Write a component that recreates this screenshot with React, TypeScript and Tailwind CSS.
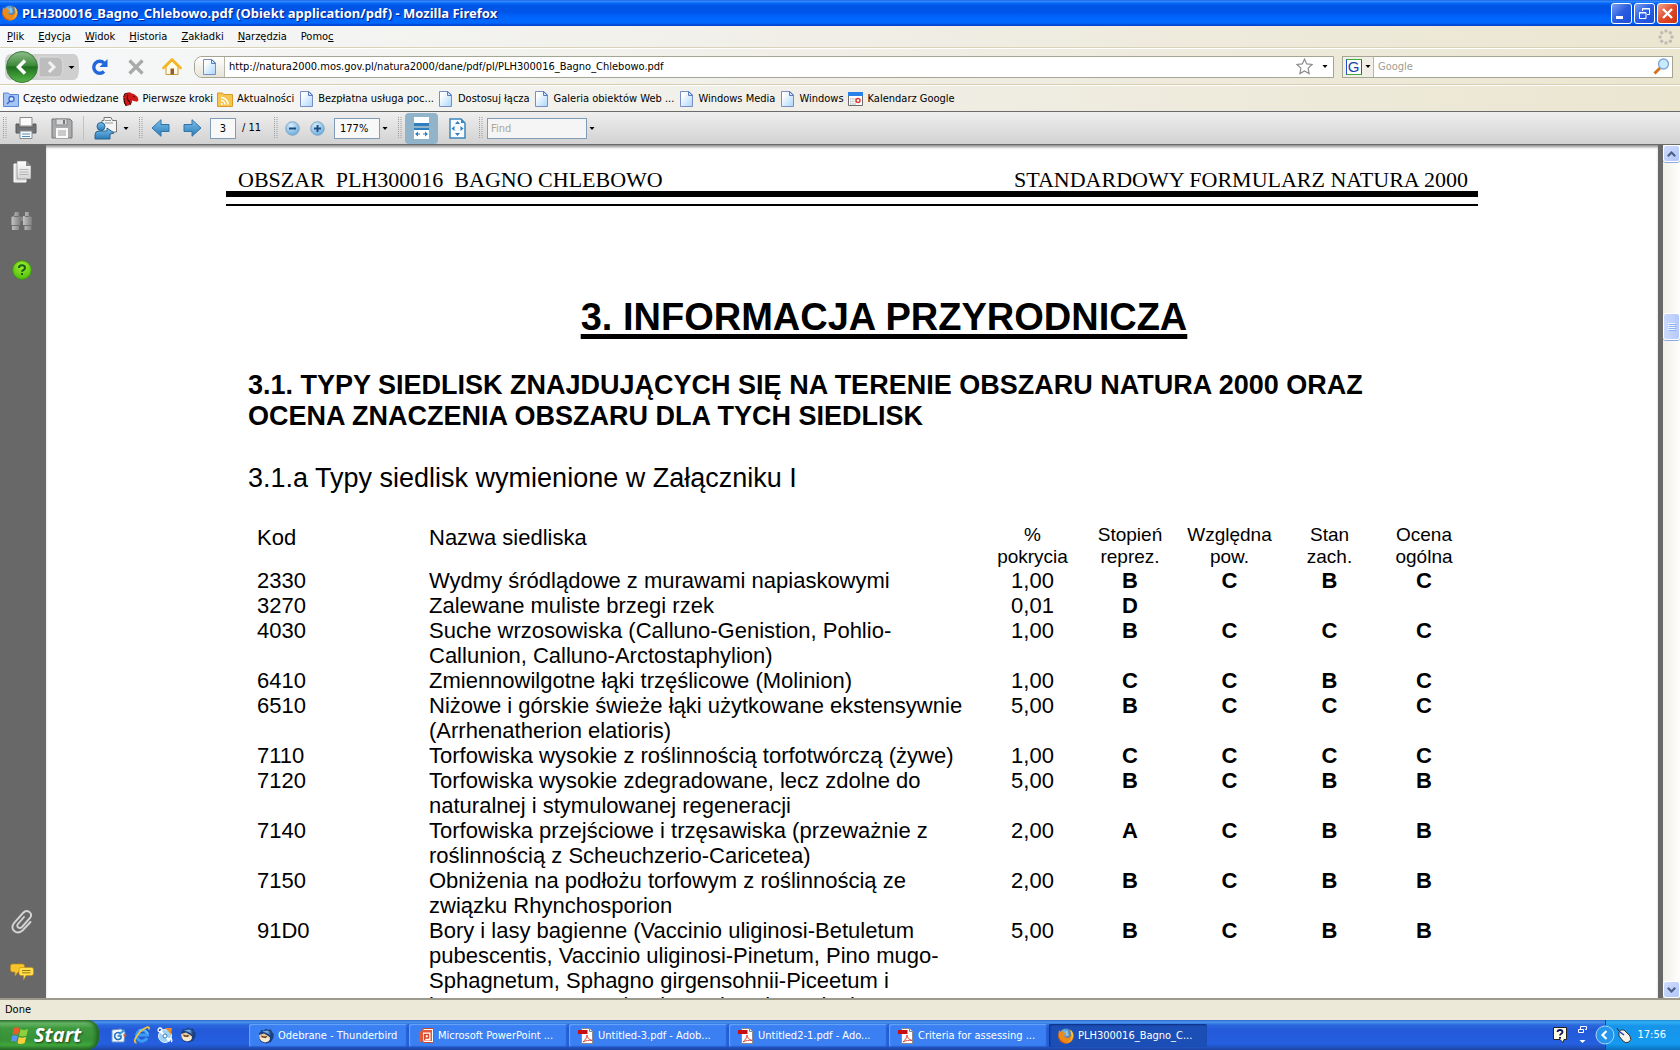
import type { ReactNode } from "react";

type Habitat = {
  code: string;
  name: string;
  cover: string;
  grades: string[];
};

const HABITATS: Habitat[] = [
  { code: "2330", name: "Wydmy śródlądowe z murawami napiaskowymi", cover: "1,00", grades: ["B", "C", "B", "C"] },
  { code: "3270", name: "Zalewane muliste brzegi rzek", cover: "0,01", grades: ["D", "", "", ""] },
  { code: "4030", name: "Suche wrzosowiska (Calluno-Genistion, Pohlio-Callunion, Calluno-Arctostaphylion)", cover: "1,00", grades: ["B", "C", "C", "C"] },
  { code: "6410", name: "Zmiennowilgotne łąki trzęślicowe (Molinion)", cover: "1,00", grades: ["C", "C", "B", "C"] },
  { code: "6510", name: "Niżowe i górskie świeże łąki użytkowane ekstensywnie (Arrhenatherion elatioris)", cover: "5,00", grades: ["B", "C", "C", "C"] },
  { code: "7110", name: "Torfowiska wysokie z roślinnością torfotwórczą (żywe)", cover: "1,00", grades: ["C", "C", "C", "C"] },
  { code: "7120", name: "Torfowiska wysokie zdegradowane, lecz zdolne do naturalnej i stymulowanej regeneracji", cover: "5,00", grades: ["B", "C", "B", "B"] },
  { code: "7140", name: "Torfowiska przejściowe i trzęsawiska (przeważnie z roślinnością z Scheuchzerio-Caricetea)", cover: "2,00", grades: ["A", "C", "B", "B"] },
  { code: "7150", name: "Obniżenia na podłożu torfowym z roślinnością ze związku Rhynchosporion", cover: "2,00", grades: ["B", "C", "B", "B"] },
  {
    code: "91D0",
    name: "Bory i lasy bagienne (Vaccinio uliginosi-Betuletum pubescentis, Vaccinio uliginosi-Pinetum, Pino mugo-Sphagnetum, Sphagno girgensohnii-Piceetum i brzozowo-sosnowe bagienne lasy borealne)",
    cover: "5,00",
    grades: ["B", "C", "B", "B"],
  },
];

const Defs = () => (
  <svg width="0" height="0" className="absolute" aria-hidden="true">
    <defs>
      <linearGradient id="blue" x1="0" y1="0" x2="0" y2="1">
        <stop offset="0" stopColor="#7cc0ea" />
        <stop offset="1" stopColor="#2a7ab8" />
      </linearGradient>
      <linearGradient id="page" x1="0" y1="0" x2="1" y2="1">
        <stop offset="0.2" stopColor="#ffffff" />
        <stop offset="1" stopColor="#a9d5fb" />
      </linearGradient>
      <linearGradient id="back" x1="0" y1="0" x2="0" y2="1">
        <stop offset="0" stopColor="#8fbf8c" />
        <stop offset="0.45" stopColor="#3f8a3c" />
        <stop offset="0.5" stopColor="#1f701f" />
        <stop offset="1" stopColor="#55b848" />
      </linearGradient>
      <linearGradient id="metal" x1="0" y1="0" x2="1" y2="0">
        <stop offset="0" stopColor="#c4c4c4" />
        <stop offset="1" stopColor="#7d7d7d" />
      </linearGradient>
      <linearGradient id="silver" x1="0" y1="0" x2="0" y2="1">
        <stop offset="0" stopColor="#ffffff" />
        <stop offset="1" stopColor="#d5d5d5" />
      </linearGradient>
      <radialGradient id="orb" cx="0.4" cy="0.3" r="0.8">
        <stop offset="0" stopColor="#d8efff" />
        <stop offset="1" stopColor="#5aa2d8" />
      </radialGradient>
      <radialGradient id="green" cx="0.5" cy="0.3" r="0.7">
        <stop offset="0" stopColor="#a6ee2c" />
        <stop offset="1" stopColor="#4cc00c" />
      </radialGradient>
      <radialGradient id="globe" cx="0.4" cy="0.3" r="0.8">
        <stop offset="0" stopColor="#7cc4f0" />
        <stop offset="1" stopColor="#1d3f8c" />
      </radialGradient>
    </defs>
  </svg>
);

const FirefoxIcon = () => (
  <svg width="16" height="16" viewBox="0 0 16 16" className="shrink-0">
    <circle cx="8" cy="7.5" r="7" fill="url(#globe)" />
    <path d="M8 2.500l2 1-.5 2 1.500 1-1 1.500-2-.5z" fill="#9ad4ee" opacity=".8" />
    <path d="M.8 2L2.500 4 4 2.600 5.500 4.500 8 5 6 7l1 2.500 3 .5 2.500-2 .3-4L12 1.500C15 3.500 16 6 15.700 8.500 15 13 12 15.600 8 15.600 4 15.600.3 12.500.3 8 .3 5.500 1 4 .8 2z" fill="#ee8a18" />
    <path d="M12.200 1.700C15 4 15.400 7 14.400 10c-1 2.500-3.400 4-6 4 4-.5 6-3.800 5.200-7.500z" fill="#f9d44c" />
    <path d="M.6 6.500C.8 11 3.500 14 8 15 4.500 16 .7 13 .4 9z" fill="#c84a12" />
  </svg>
);

const ThunderbirdIcon = () => (
  <svg width="16" height="16" viewBox="0 0 16 16" className="shrink-0">
    <path d="M1 5L3 3.500 2.500 2 6 2.500 8 .5l1.500 1.300L13 1.500 14 4l1.800 2-.5 4-2.300 4-5 1.500L3 14 1 10z" fill="#1c3f80" />
    <path d="M4 3.500l5-1 4 2-3-.3 3 3-5-2.500z" fill="#6fb0e6" />
    <path d="M1 7l5-1.500 5 3 1 3-3 2.500-5-.5L1.500 10.500z" fill="#e9c99b" />
    <path d="M2 9l5 1.500L12 9l-1 4-4 1.500-4-2z" fill="#f6ead0" />
    <path d="M3 7.500l3 1 3-.5-1 2-4-.5z" fill="#573720" />
  </svg>
);

const PageIcon = () => (
  <svg width="13" height="16" viewBox="0 0 13 16" className="shrink-0">
    <path d="M.5.5h8.500l3.500 3.500v11.500H.5z" fill="url(#page)" stroke="#7a8dc4" />
    <path d="M8.500.5v4h4z" fill="#cfe4fb" stroke="#5c7cc0" />
  </svg>
);

const PdfIcon = () => (
  <svg width="16" height="16" viewBox="0 0 16 16" className="shrink-0">
    <path d="M3.500.5h8l3 3v12h-11z" fill="#fff" stroke="#8a8a8a" />
    <path d="M11.500.5v3h3" fill="#eee" stroke="#8a8a8a" />
    <path d="M0 2h9.500v4H0z" fill="#c80f10" />
    <path d="M5 14c2-2 4-4.500 4-7 0 2.500 2 4.500 5 5.500-3-.5-6-.2-9 1.500z" fill="none" stroke="#e04a44" />
  </svg>
);

const PowerPointIcon = () => (
  <svg width="16" height="16" viewBox="0 0 16 16" className="shrink-0">
    <path d="M5 .5h10.500v14H5z" fill="#fff" stroke="#c9492a" />
    <path d="M1 5L4 2h10v11H4l-3 2z" fill="#e25a35" />
    <path d="M5 4.500h7.500v8H5z" fill="#fff" />
    <path d="M7 6.500h3.500v3.500H7zM6.500 6v6" fill="none" stroke="#d9492a" strokeWidth="1.500" />
  </svg>
);

const IeIcon = () => (
  <svg width="18" height="18" viewBox="0 0 18 18">
    <path d="M14 12a5.500 5.500 0 1 1 .5-3H5" fill="none" stroke="#3d9df2" strokeWidth="3" />
    <path d="M15 8a6 6 0 0 0-9-3.500" fill="none" stroke="#8fd3fb" strokeWidth="1" />
    <path d="M3.500 16.500C0 17 2 11 7 6S17-.5 16 3.500" fill="none" stroke="#f4c43a" strokeWidth="1.700" />
  </svg>
);

const MailLaunchIcon = () => (
  <svg width="17" height="17" viewBox="0 0 17 17">
    <path d="M2 3l9-1 4 3-1 10H2z" fill="#f3f8fd" stroke="#7095bd" />
    <path d="M10.500 6.500A3.500 3.500 0 1 0 11 11V9H7.500" fill="none" stroke="#2372c0" strokeWidth="1.600" />
    <path d="M8 7l6-5 1 2-5 4z" fill="#3d9be0" />
    <path d="M13 7l4 1-3 2z" fill="#e0662a" />
  </svg>
);

const DiscIcon = () => (
  <svg width="17" height="17" viewBox="0 0 17 17">
    <circle cx="8" cy="9" r="6.500" fill="#9fd2f5" stroke="#e6f5ff" />
    <path d="M8 9L3 4M8 9l5 5" stroke="#fff" strokeWidth="2" />
    <circle cx="8" cy="9" r="2" fill="#fff" stroke="#3c79b8" />
    <path d="M8 1l7 0-1 7-2-3z" fill="#f08a24" />
    <circle cx="3" cy="3" r="2" fill="none" stroke="#fff" strokeWidth="1.300" />
    <path d="M11 14a2 2 0 1 1 3 1" fill="none" stroke="#fff" strokeWidth="1.300" />
  </svg>
);

const Caret = () => (
  <svg width="6" height="3" viewBox="0 0 6 3" className="shrink-0">
    <path d="M.5 0h5L3 3z" fill="#000" />
  </svg>
);

const Grip = () => (
  <svg width="4" height="22" viewBox="0 0 4 22" className="shrink-0">
    <path d="M.5 0v22M3 0v22" stroke="#9b9b9b" strokeDasharray="1 1" />
  </svg>
);

const TitleBar = () => (
  <header className="flex h-[26px] shrink-0 items-center justify-between bg-[linear-gradient(#0a4fd8_0,#3d95ff_1px,#0a6afa_3px,#0054e3_6px,#0055ea_12px,#0066ff_18px,#0069ff_23px,#0046d0_25px)] pr-0.5 pl-0.5">
    <h1 className="flex items-center gap-1 text-[13px] font-bold text-white [font-family:'Noto_Sans',sans-serif] [text-shadow:1px_1px_1px_#0a1883]">
      <FirefoxIcon />
      PLH300016_Bagno_Chlebowo.pdf (Obiekt application/pdf) - Mozilla Firefox
    </h1>
    <div className="flex gap-0.5">
      <button aria-label="Minimize" className="h-[21px] w-[21px] rounded-[3px] border border-white bg-linear-to-br from-[#7b9df0] via-[#2a5ddf] to-[#1c4ddb]">
        <svg width="19" height="19" viewBox="0 0 19 19">
          <path d="M4 12h7v3H4z" fill="#fff" />
        </svg>
      </button>
      <button aria-label="Restore" className="h-[21px] w-[21px] rounded-[3px] border border-white bg-linear-to-br from-[#7b9df0] via-[#2a5ddf] to-[#1c4ddb]">
        <svg width="19" height="19" viewBox="0 0 19 19" fill="none" stroke="#fff">
          <path d="M7.500 7V4.500h7v6H12M7 5h8" />
          <path d="M4.500 8.500h6.500v6H4.500zM4 9h7" />
        </svg>
      </button>
      <button aria-label="Close" className="h-[21px] w-[21px] rounded-[3px] border border-white bg-linear-to-br from-[#f0a18c] via-[#e0492a] to-[#cc3408]">
        <svg width="19" height="19" viewBox="0 0 19 19">
          <path d="M5 5l9 9M14 5l-9 9" stroke="#fff" strokeWidth="2.400" />
        </svg>
      </button>
    </div>
  </header>
);

// [text before, underlined access key, text after]
const MENUS = [
  ["", "P", "lik"],
  ["", "E", "dycja"],
  ["", "W", "idok"],
  ["", "H", "istoria"],
  ["", "Z", "akładki"],
  ["", "N", "arzędzia"],
  ["Pomo", "c", ""],
];

const MenuBar = () => (
  <nav className="flex h-[22px] shrink-0 items-center justify-between border-b border-[#d8d2b8] pr-[6px] pl-[7px] shadow-[0_1px_0_#fff]">
    <div className="flex gap-[14px]">
      {MENUS.map(([before, key, after]) => (
        <button key={key}>
          {before}
          <span className="underline">{key}</span>
          {after}
        </button>
      ))}
    </div>
    <svg width="16" height="16" viewBox="0 0 16 16" fill="#bdbbb4">
      <circle cx="8" cy="2" r="1.700" />
      <circle cx="12.300" cy="3.700" r="1.700" />
      <circle cx="14" cy="8" r="1.700" />
      <circle cx="12.300" cy="12.300" r="1.700" />
      <circle cx="8" cy="14" r="1.700" />
      <circle cx="3.700" cy="12.300" r="1.700" />
      <circle cx="2" cy="8" r="1.700" />
      <circle cx="3.700" cy="3.700" r="1.700" />
    </svg>
  </nav>
);

const NavBar = () => (
  <div className="flex h-[37px] shrink-0 items-center border-b border-[#d8ccb0] pt-px pr-[7px] pl-[3px] shadow-[0_1px_0_#fff]">
    <button aria-label="Back and forward" className="shrink-0">
      <svg width="78" height="34" viewBox="0 0 78 34">
        <path d="M2 10Q3 4 8 4h62c5 0 6 6 6 13s-1 13-6 13H8q-5 0-6-6z" fill="#cfcfcf" />
        <path d="M36 7h19q5 0 5 10t-5 10H36z" fill="#bdbdbd" stroke="#dedede" />
        <path d="M46 12l5 5-5 5" fill="none" stroke="#f2f2f2" strokeWidth="3" />
        <circle cx="19" cy="17" r="15.500" fill="url(#back)" stroke="#3c7a3c" />
        <path d="M22 10.500L15.500 17l6.500 6.500" fill="none" stroke="#fff" strokeWidth="3.500" />
        <path d="M65.500 16h6l-3 3z" fill="#000" />
      </svg>
    </button>
    <button aria-label="Reload" className="ml-[10px] shrink-0">
      <svg width="18" height="18" viewBox="0 0 18 18">
        <path d="M13 13.500A6 6 0 1 1 13 5" fill="none" stroke="#2268dc" strokeWidth="3.400" />
        <path d="M16.500 1v8h-8z" fill="#2268dc" />
      </svg>
    </button>
    <button aria-label="Stop" className="ml-[18px] shrink-0">
      <svg width="18" height="18" viewBox="0 0 18 18">
        <path d="M2.500 2.500l13 13M15.500 2.500l-13 13" stroke="#a9a9a9" strokeWidth="3.200" />
      </svg>
    </button>
    <button aria-label="Home" className="ml-[17px] shrink-0">
      <svg width="20" height="18" viewBox="0 0 20 18">
        <path d="M4 9l6-6 6 6v7.500H4z" fill="#fffbe6" stroke="#c89a3c" />
        <path d="M10 1.500L1.500 10M10 1.500l8.500 8.500" stroke="#f3b625" strokeWidth="2.600" strokeLinecap="round" />
        <path d="M8.500 10.500h3.500v6H8.500z" fill="#9c5a2c" />
      </svg>
    </button>
    <div className="ml-[12px] flex h-[22px] flex-1 items-center rounded-l-lg border border-[#a5a595] bg-white">
      <span className="flex h-full w-[30px] shrink-0 items-center justify-center rounded-l-lg border-r border-[#b8b8a8] bg-linear-to-b from-white to-[#e6e3d6]">
        <PageIcon />
      </span>
      <input
        aria-label="Address"
        className="min-w-0 flex-1 px-1 outline-none"
        defaultValue="http://natura2000.mos.gov.pl/natura2000/dane/pdf/pl/PLH300016_Bagno_Chlebowo.pdf"
      />
      <button aria-label="Bookmark this page">
        <svg width="17" height="17" viewBox="0 0 17 17">
          <path d="M8.500 1.200l2.200 4.700 5.300.6-3.900 3.600 1 5.400-4.600-2.600-4.600 2.600 1-5.400L1 6.500l5.300-.6z" fill="#fff" stroke="#8c8c8c" strokeWidth="1.200" />
        </svg>
      </button>
      <button aria-label="Address history" className="mr-[5px] ml-[9px]">
        <Caret />
      </button>
    </div>
    <div className="ml-2 flex h-[22px] w-[331px] items-center border border-[#a5a595] bg-white">
      <button aria-label="Search engine" className="flex h-full w-[31px] shrink-0 items-center justify-center gap-[3px] border-r border-[#b8b8a8] bg-[#f1efe6]">
        <span className="h-4 w-4 border border-t-[#3aaa3a] border-r-[#d02020] border-b-[#3aaa3a] border-l-[#2050c8] bg-white text-[15px] leading-[14px] text-[#1c3fa8] [font-family:'Liberation_Sans',sans-serif]">
          G
        </span>
        <Caret />
      </button>
      <input aria-label="Search" placeholder="Google" className="min-w-0 flex-1 px-1 outline-none placeholder:text-[#a19d90]" />
      <button aria-label="Start search" className="mr-0.5">
        <svg width="17" height="17" viewBox="0 0 17 17">
          <path d="M1.500 15.500L7 10" stroke="#d07420" strokeWidth="3" />
          <circle cx="10.500" cy="6" r="5" fill="#c8e8fc" stroke="#7fa8d8" strokeWidth="1.400" />
        </svg>
      </button>
    </div>
  </div>
);

const BOOKMARKS: { label: string; icon: ReactNode }[] = [
  {
    label: "Często odwiedzane",
    icon: (
      <svg width="16" height="15" viewBox="0 0 16 15">
        <path d="M.5 1h5l1 1.500h9v12H.5z" fill="#a5c4f4" stroke="#5a86d8" />
        <circle cx="8.500" cy="7" r="2.500" fill="#dcecff" stroke="#3c68c8" strokeWidth="1.300" />
        <path d="M7 9l-3 3" stroke="#3c68c8" strokeWidth="1.500" />
      </svg>
    ),
  },
  {
    label: "Pierwsze kroki",
    icon: (
      <svg width="17" height="16" viewBox="0 0 17 16">
        <path d="M.5 6L2 2.500 5 1.500 6.500.5 9 2l3 1 3.500 3 1 3-1.500 2-3.500-1-2-.5 0 2.500-2 2.500-4 1L1 12z" fill="#d01a1a" />
        <path d="M.5 6L2 2.500 5 1.500M1 7l.5 4.500 2 4M5 3.500L4.500 8 7 11l1 3M11 5l1.500 1" stroke="#300606" strokeWidth="1.100" fill="none" />
      </svg>
    ),
  },
  {
    label: "Aktualności",
    icon: (
      <svg width="16" height="15" viewBox="0 0 16 15">
        <path d="M.5 1h5l1 1.500h9v12H.5z" fill="#f9c552" stroke="#d89a28" />
        <path d="M4 5.500a7 7 0 0 1 7 7M4 8.500a4 4 0 0 1 4 4" stroke="#fff" strokeWidth="1.500" fill="none" />
        <circle cx="4.800" cy="12" r="1" fill="#fff" />
      </svg>
    ),
  },
  { label: "Bezpłatna usługa poc...", icon: <PageIcon /> },
  { label: "Dostosuj łącza", icon: <PageIcon /> },
  { label: "Galeria obiektów Web ...", icon: <PageIcon /> },
  { label: "Windows Media", icon: <PageIcon /> },
  { label: "Windows", icon: <PageIcon /> },
  {
    label: "Kalendarz Google",
    icon: (
      <svg width="15" height="14" viewBox="0 0 15 14">
        <path d="M.5.5h14v13H.5z" fill="#fff" stroke="#6c6c6c" />
        <path d="M0 0h15v4H0z" fill="#2880e8" />
        <path d="M2 7h6M2 9.500h6M2 12h6" stroke="#b8bcc4" strokeWidth="1.500" strokeDasharray="1.500 .7" />
        <circle cx="10" cy="8.500" r="2" fill="#fff" stroke="#e03c30" strokeWidth="1.500" />
      </svg>
    ),
  },
];

const BookmarksBar = () => (
  <nav className="flex h-[26px] shrink-0 items-center gap-1 pt-0.5 pl-[3px]">
    {BOOKMARKS.map(({ label, icon }) => (
      <a key={label} href="#" className="flex items-center gap-1 whitespace-nowrap">
        <span className="flex w-4 justify-center">{icon}</span>
        {label}
      </a>
    ))}
  </nav>
);

const PdfToolbar = () => (
  <div className="flex h-[34px] shrink-0 items-center border-y border-[#6b6b6b] bg-linear-to-b from-[#efefef] to-[#d2d2d2] pl-[3px]">
    <Grip />
    <button aria-label="Print" className="ml-[8px]">
      <svg width="22" height="24" viewBox="0 0 22 24">
        <path d="M5 1.500h12V10H5z" fill="#fafafa" stroke="#8a8a8a" />
        <path d="M1 8h3v3h14V8h3v9H1z" fill="#6e7377" stroke="#585858" />
        <path d="M5 15h12v7.500H5z" fill="#fafafa" stroke="#8a8a8a" />
        <path d="M7 18h8M7 20.500h8" stroke="#4c8fc0" />
      </svg>
    </button>
    <button aria-label="Save" className="ml-[14px]">
      <svg width="22" height="21" viewBox="0 0 22 21">
        <path d="M1 1h18l2 2v17H1z" fill="#a9abad" stroke="#77797b" />
        <path d="M5 1h11v6H5z" fill="#dedede" stroke="#8a8a8a" />
        <path d="M12 2h2v4h-2z" fill="#777" />
        <path d="M5 10h12v10H5z" fill="#fafafa" />
        <path d="M7 13h8M7 15h8M7 17h8" stroke="#9a9a9a" />
      </svg>
    </button>
    <span className="ml-[10px] h-6 w-px bg-[#c2c2c2]" />
    <button aria-label="Send" className="ml-[10px] flex items-center gap-[6px]">
      <svg width="23" height="24" viewBox="0 0 23 24">
        <path d="M10 1.500h7l1.500 3h4V16H8V4.500h2z" fill="#f4f4f4" stroke="#777" />
        <path d="M11 4.500h6M11 7h8" stroke="#999" />
        <circle cx="7" cy="10.500" r="4" fill="url(#blue)" stroke="#27648f" />
        <path d="M1 23v-4q0-4 4-4h8v-3l7 5-4 1v5z" fill="url(#blue)" stroke="#27648f" />
      </svg>
      <Caret />
    </button>
    <span className="ml-[10px] flex">
      <Grip />
    </span>
    <button aria-label="Previous page" className="ml-[8px]">
      <svg width="19" height="18" viewBox="0 0 19 18">
        <path d="M1 9l9-8.300v4.800h8v7h-8v4.800z" fill="url(#blue)" stroke="#2f75a8" />
      </svg>
    </button>
    <button aria-label="Next page" className="ml-[13px]">
      <svg width="19" height="18" viewBox="0 0 19 18">
        <path d="M18 9L9 .7v4.800H1v7h8v4.800z" fill="url(#blue)" stroke="#2f75a8" />
      </svg>
    </button>
    <input aria-label="Page number" defaultValue="3" className="ml-[8px] h-[21px] w-[26px] border border-[#7f9db9] bg-[#f8f8f8] text-center" />
    <span className="ml-[6px] w-[22px] whitespace-nowrap">/ 11</span>
    <span className="ml-[10px] flex">
      <Grip />
    </span>
    <button aria-label="Zoom out" className="ml-[7px]">
      <svg width="15" height="15" viewBox="0 0 15 15">
        <circle cx="7.500" cy="7.500" r="6.800" fill="url(#orb)" stroke="#86a8c0" />
        <path d="M4 7.500h7" stroke="#1c4c80" strokeWidth="2" />
      </svg>
    </button>
    <button aria-label="Zoom in" className="ml-[10px]">
      <svg width="15" height="15" viewBox="0 0 15 15">
        <circle cx="7.500" cy="7.500" r="6.800" fill="url(#orb)" stroke="#86a8c0" />
        <path d="M4 7.500h7M7.500 4v7" stroke="#1c4c80" strokeWidth="2" />
      </svg>
    </button>
    <input aria-label="Zoom" defaultValue="177%" className="ml-[9px] h-[21px] w-[46px] border border-[#7f9db9] bg-[#f8f8f8] px-[5px]" />
    <button aria-label="Zoom levels" className="ml-[2px]">
      <Caret />
    </button>
    <span className="ml-[10px] flex">
      <Grip />
    </span>
    <button aria-label="Fit width" className="ml-[3px] flex h-[31px] w-[33px] items-center justify-center rounded bg-[#92b4cb]">
      <svg width="17" height="22" viewBox="0 0 17 22">
        <path d="M1 0h15v7H1z" fill="#fff" />
        <path d="M1 6h15v3H1z" fill="#2f7fbe" />
        <path d="M1 11h15v11H1z" fill="#fff" />
        <path d="M1 11h15v2H1z" fill="#2f7fbe" />
        <path d="M3 17h11" stroke="#2f7fbe" strokeDasharray="4 3" />
        <path d="M2 17l3-2.500v5zM15 17l-3-2.500v5z" fill="#2f7fbe" />
      </svg>
    </button>
    <button aria-label="Fit page" className="ml-[11px]">
      <svg width="17" height="21" viewBox="0 0 17 21">
        <path d="M1 1h11l4 4v15H1z" fill="#f8fcff" stroke="#3b86bd" strokeWidth="1.500" />
        <path d="M12 1v4h4z" fill="#3b86bd" />
        <path d="M8.500 3l2.500 3H6zM8.500 18L6 15h5zM2.500 10.500l3-2.500v5zM14.500 10.500l-3-2.500v5z" fill="#2f7fbe" />
      </svg>
    </button>
    <span className="ml-[13px] flex">
      <Grip />
    </span>
    <input aria-label="Find" placeholder="Find" className="ml-[4px] h-[21px] w-[100px] border border-[#7f9db9] bg-[#f5f5f5] px-[3px] placeholder:text-[#a9a797]" />
    <button aria-label="Find options" className="ml-[2px]">
      <Caret />
    </button>
  </div>
);

const SideBar = () => (
  <aside className="flex w-[46px] shrink-0 flex-col items-center justify-between bg-[#686868] pt-[15px] pr-0.5 pb-[17px]">
    <div className="flex flex-col items-center gap-[29px]">
      <button aria-label="Pages">
        <svg width="19" height="23" viewBox="0 0 19 23">
          <path d="M1 4h12v18H1z" fill="#e6e6e6" stroke="#fff" />
          <path d="M4 1h9l5 5v13H4z" fill="url(#silver)" stroke="#777" strokeWidth=".6" />
          <path d="M13 1v5h5z" fill="#888" />
          <path d="M6.500 9.500h9M6.500 12h9M6.500 14.500h9" stroke="#b4b4b4" />
        </svg>
      </button>
      <button aria-label="Search">
        <svg width="22" height="19" viewBox="0 0 22 19">
          <path d="M4 0h4v4h1.500v9H8v5H1v-5H.5V5L3 4z" fill="url(#metal)" />
          <path d="M14 0h4v4l3 1v8h-.5v5h-7v-5H12V4h2z" fill="url(#metal)" />
          <path d="M9.500 5H12v4H9.500z" fill="#8a8a8a" />
          <path d="M1 13.500h7.500M13 13.500h8M3 4.500h5M14 4.500h4" stroke="#707070" />
        </svg>
      </button>
      <button aria-label="Help">
        <svg width="20" height="20" viewBox="0 0 20 20">
          <circle cx="10" cy="10" r="9.300" fill="url(#green)" stroke="#3c9a10" />
          <path d="M7 8q0-2.700 3-2.700T13 8q0 1.300-1.500 2t-1.500 1.800" fill="none" stroke="#14601c" strokeWidth="2" />
          <path d="M9 13h2v2H9z" fill="#14601c" />
        </svg>
      </button>
    </div>
    <div className="flex flex-col items-center gap-[29px]">
      <button aria-label="Attachments">
        <svg width="22" height="24" viewBox="0 0 22 24" fill="none" stroke="#d4d4d4" strokeWidth="1.900" strokeLinecap="round">
          <path d="M19.500 12l-8 8.500c-6 5-13-1-8.500-7.500l9-10c4-4.500 10.500 0 7 5l-8 9c-3 2.500-6-.5-4-3l6-7" />
        </svg>
      </button>
      <button aria-label="Comments">
        <svg width="24" height="18" viewBox="0 0 24 18" stroke="#c48a10" strokeWidth=".6">
          <path d="M2.500 1h10q2 0 2 2v4q0 2-2 2H8l-3 4V9H2.500q-2 0-2-2V3q0-2 2-2z" fill="#f7c52c" />
          <path d="M11 4.500h10.500q2 0 2 2v4q0 2-2 2H16L13.500 17v-4.500H11q-2 0-2-2v-4q0-2 2-2z" fill="#ffdf4c" />
          <path d="M12 7.500h8.500M12 9.800h8.500" stroke="#9c7810" strokeWidth="1" />
        </svg>
      </button>
    </div>
  </aside>
);

const HabitatTable = () => (
  <table className="ml-[31px] table-fixed text-[22px] leading-[25px]">
    <colgroup>
      <col className="w-[172px]" />
      <col className="w-[555px]" />
      <col className="w-[97px]" />
      <col className="w-[98px]" />
      <col className="w-[101px]" />
      <col className="w-[99px]" />
      <col className="w-[90px]" />
    </colgroup>
    <thead>
      <tr className="align-top text-[19px] leading-[22px]">
        <th className="text-left text-[22px] leading-[27px] font-normal">Kod</th>
        <th className="text-left text-[22px] leading-[27px] font-normal">Nazwa siedliska</th>
        <th className="font-normal">
          %
          <br />
          pokrycia
        </th>
        <th className="font-normal">Stopień reprez.</th>
        <th className="font-normal">Względna pow.</th>
        <th className="font-normal">
          Stan
          <br />
          zach.
        </th>
        <th className="font-normal">Ocena ogólna</th>
      </tr>
    </thead>
    <tbody>
      {HABITATS.map((habitat) => (
        <tr key={habitat.code} className="align-top">
          <td>{habitat.code}</td>
          <td className="pr-4">{habitat.name}</td>
          <td className="text-center">{habitat.cover}</td>
          {habitat.grades.map((grade, i) => (
            <td key={i} className="text-center font-bold">
              {grade}
            </td>
          ))}
        </tr>
      ))}
    </tbody>
  </table>
);

const Document = () => (
  <main className="min-w-0 flex-1 overflow-hidden bg-white pt-6 text-black shadow-[inset_0_3px_3px_-1px_#8c8c8c] [font-family:'Liberation_Sans',sans-serif]">
    <article className="mx-auto max-w-[1252px]">
      <div className="flex justify-between border-b-[6px] border-black pr-[10px] pl-3 text-[22px] leading-[22px] [font-family:'Liberation_Serif',serif]">
        <span className="whitespace-pre">OBSZAR  PLH300016  BAGNO CHLEBOWO</span>
        <span>STANDARDOWY FORMULARZ NATURA 2000</span>
      </div>
      <div className="mt-[7px] h-[2px] bg-black" />
      <h2 className="mt-[88px] pl-16 text-center text-[38px] leading-[46px] font-bold underline decoration-[5px] underline-offset-[4px]">
        3. INFORMACJA PRZYRODNICZA
      </h2>
      <h3 className="mt-[30px] pl-[22px] text-[27px] leading-[31px] font-bold">
        3.1. TYPY SIEDLISK ZNAJDUJĄCYCH SIĘ NA TERENIE OBSZARU NATURA 2000 ORAZ
        <br />
        OCENA ZNACZENIA OBSZARU DLA TYCH SIEDLISK
      </h3>
      <h4 className="mt-[31px] mb-[30px] pl-[22px] text-[27px] leading-[31px]">3.1.a Typy siedlisk wymienione w Załączniku I</h4>
      <HabitatTable />
    </article>
  </main>
);

const ScrollBar = () => (
  <div className="flex w-[22px] shrink-0 border-l-[5px] border-[#686868] bg-linear-to-r from-[#f1f0e9] to-[#fefefb]">
    <div className="flex w-full flex-col justify-between">
      <div>
        <button aria-label="Scroll up" className="flex h-[17px] w-full items-center justify-center rounded-[3px] border border-white bg-linear-to-br from-[#cfdcfd] to-[#b2c6f8] shadow-[0_1px_0_#8ea9e0]">
          <svg width="9" height="6" viewBox="0 0 9 6">
            <path d="M.8 5.200l3.700-3.700 3.700 3.700" fill="none" stroke="#4d6185" strokeWidth="2.200" />
          </svg>
        </button>
        <div className="mt-[151px] flex h-[27px] w-full items-center justify-center rounded-[3px] border border-white bg-linear-to-r from-[#cbdafd] to-[#b6c9f9] shadow-[0_1px_0_#8ea9e0]">
          <svg width="8" height="8" viewBox="0 0 8 8">
            <path d="M0 .5h7M0 2.500h7M0 4.500h7M0 6.500h7" stroke="#eef4fe" />
            <path d="M1 1.500h7M1 3.500h7M1 5.500h7M1 7.500h7" stroke="#8cb0f8" />
          </svg>
        </div>
      </div>
      <button aria-label="Scroll down" className="flex h-[17px] w-full items-center justify-center rounded-[3px] border border-white bg-linear-to-br from-[#cfdcfd] to-[#b2c6f8] shadow-[0_1px_0_#8ea9e0]">
        <svg width="9" height="6" viewBox="0 0 9 6">
          <path d="M.8.8l3.700 3.700L8.200.8" fill="none" stroke="#4d6185" strokeWidth="2.200" />
        </svg>
      </button>
    </div>
  </div>
);

const TASKS: { label: string; icon: ReactNode; active?: boolean }[] = [
  { label: "Odebrane - Thunderbird", icon: <ThunderbirdIcon /> },
  { label: "Microsoft PowerPoint ...", icon: <PowerPointIcon /> },
  { label: "Untitled-3.pdf - Adob...", icon: <PdfIcon /> },
  { label: "Untitled2-1.pdf - Ado...", icon: <PdfIcon /> },
  { label: "Criteria for assessing ...", icon: <PdfIcon /> },
  { label: "PLH300016_Bagno_C...", icon: <FirefoxIcon />, active: true },
];

const TaskBar = () => (
  <footer className="flex h-[30px] shrink-0 items-stretch bg-[linear-gradient(#2a62cc_0,#4a96ec_2px,#2a68de_5px,#2359d8_10px,#2560e0_24px,#1c46a4_30px)] text-white">
    <button className="flex w-[99px] shrink-0 items-center gap-[5px] rounded-r-xl bg-[linear-gradient(#3a7c3a_0,#6ab868_3px,#3f9a3f_8px,#379237_20px,#3fa83c_25px,#2c6c2c_30px)] pl-[11px] text-[20px] font-bold italic shadow-[inset_-3px_0_4px_#1f6322] [font-family:'Open_Sans',sans-serif] [text-shadow:1px_1px_2px_#1b4018]">
      <svg width="18" height="18" viewBox="0 0 18 18">
        <path d="M3 2q3-1.500 5.500.5L7 9Q4.500 7.500 1.500 8.500z" fill="#ee5a2a" />
        <path d="M9.500 3Q12.500 5 17 3l-1.500 6.500Q11 11.500 8 9.500z" fill="#8cd03c" />
        <path d="M1.200 9.700Q4 8.500 6.700 10l-1.400 6Q3 14.500 0 15.500z" fill="#5a94f4" />
        <path d="M7.700 10.700q3 2 7.500 0L13.700 17q-4.500 2-7.200 0z" fill="#fbcf3a" />
      </svg>
      Start
    </button>
    <div className="ml-[11px] flex w-[139px] shrink-0 items-center gap-[6px]">
      <button aria-label="Outlook Express">
        <MailLaunchIcon />
      </button>
      <button aria-label="Internet Explorer">
        <IeIcon />
      </button>
      <button aria-label="Nero">
        <DiscIcon />
      </button>
      <button aria-label="Thunderbird">
        <ThunderbirdIcon />
      </button>
    </div>
    <div className="flex min-w-0 flex-1 items-center gap-[2px] pt-px">
      {TASKS.map(({ label, icon, active }) => (
        <button
          key={label}
          className={
            active
              ? "flex h-[23px] w-[158px] items-center gap-1 rounded-xs bg-[#1c4fb5] pl-[9px] whitespace-nowrap shadow-[inset_1px_1px_2px_#0c2f80]"
              : "flex h-[23px] w-[158px] items-center gap-1 rounded-xs bg-[#3a80f3] pl-[9px] whitespace-nowrap shadow-[inset_1px_1px_1px_#6ba4fa,inset_-1px_-1px_1px_#2a62d4]"
          }
        >
          {icon}
          {label}
        </button>
      ))}
    </div>
    <button aria-label="Help" className="shrink-0">
      <svg width="15" height="16" viewBox="0 0 15 16">
        <path d="M.5.5h13v12H11l-1 3-3-3H.5z" fill="#fffde0" stroke="#222" />
        <path d="M4.500 5q0-2 2.500-2t2.500 2q0 1-1.300 1.700T7 8.500" fill="none" stroke="#101060" strokeWidth="1.800" />
        <path d="M6 10h2v1.700H6z" fill="#101060" />
      </svg>
    </button>
    <button aria-label="Language bar" className="mr-[18px] ml-[10px] shrink-0">
      <svg width="9" height="18" viewBox="0 0 9 18" fill="none" stroke="#fff">
        <path d="M2.500 3V.5h6v3H7M.5 3.500h5v3h-5z" />
        <path d="M1.500 14h6L4.500 17z" fill="#fff" stroke="none" />
      </svg>
    </button>
    <div className="flex shrink-0 items-center bg-[linear-gradient(#1c86d8_0,#30b0f4_2px,#1794ea_6px,#139af0_24px,#0c70c0_30px)] pr-[14px] shadow-[inset_1px_0_0_#0c4a90]">
      <button aria-label="Show hidden icons" className="-ml-[10px]">
        <svg width="20" height="20" viewBox="0 0 20 20">
          <circle cx="10" cy="10" r="9" fill="#2494ec" stroke="#a4d8fa" />
          <path d="M11.500 6l-4 4 4 4" fill="none" stroke="#fff" strokeWidth="2.200" />
        </svg>
      </button>
      <svg width="16" height="17" viewBox="0 0 16 17" className="mr-[5px] ml-px">
        <path d="M1 1l2 3" stroke="#222" />
        <path d="M3 5q2-3 5-2l6 6q2 4-1 6t-6-1L3 9z" fill="#f6f3ea" stroke="#333" />
        <path d="M4 5l4 3" stroke="#2038c0" strokeWidth="1.500" />
      </svg>
      <time>17:56</time>
    </div>
  </footer>
);

export default function App() {
  return (
    <div className="flex h-screen flex-col overflow-hidden bg-[#ece9d8] text-[11px] leading-[14px] text-black [font-family:'DejaVu_Sans_Condensed','DejaVu_Sans',sans-serif]">
      <Defs />
      <TitleBar />
      <div className="shrink-0 bg-linear-to-r from-[#f6f8fa] via-[#f0eee6] to-[#ebe6d0]">
        <MenuBar />
        <NavBar />
        <BookmarksBar />
      </div>
      <PdfToolbar />
      <div className="flex min-h-0 flex-1">
        <SideBar />
        <Document />
        <ScrollBar />
      </div>
      <div role="status" className="flex h-[22px] shrink-0 items-center border-t-2 border-[#9c9a8c] pl-[5px]">
        Done
      </div>
      <TaskBar />
    </div>
  );
}
